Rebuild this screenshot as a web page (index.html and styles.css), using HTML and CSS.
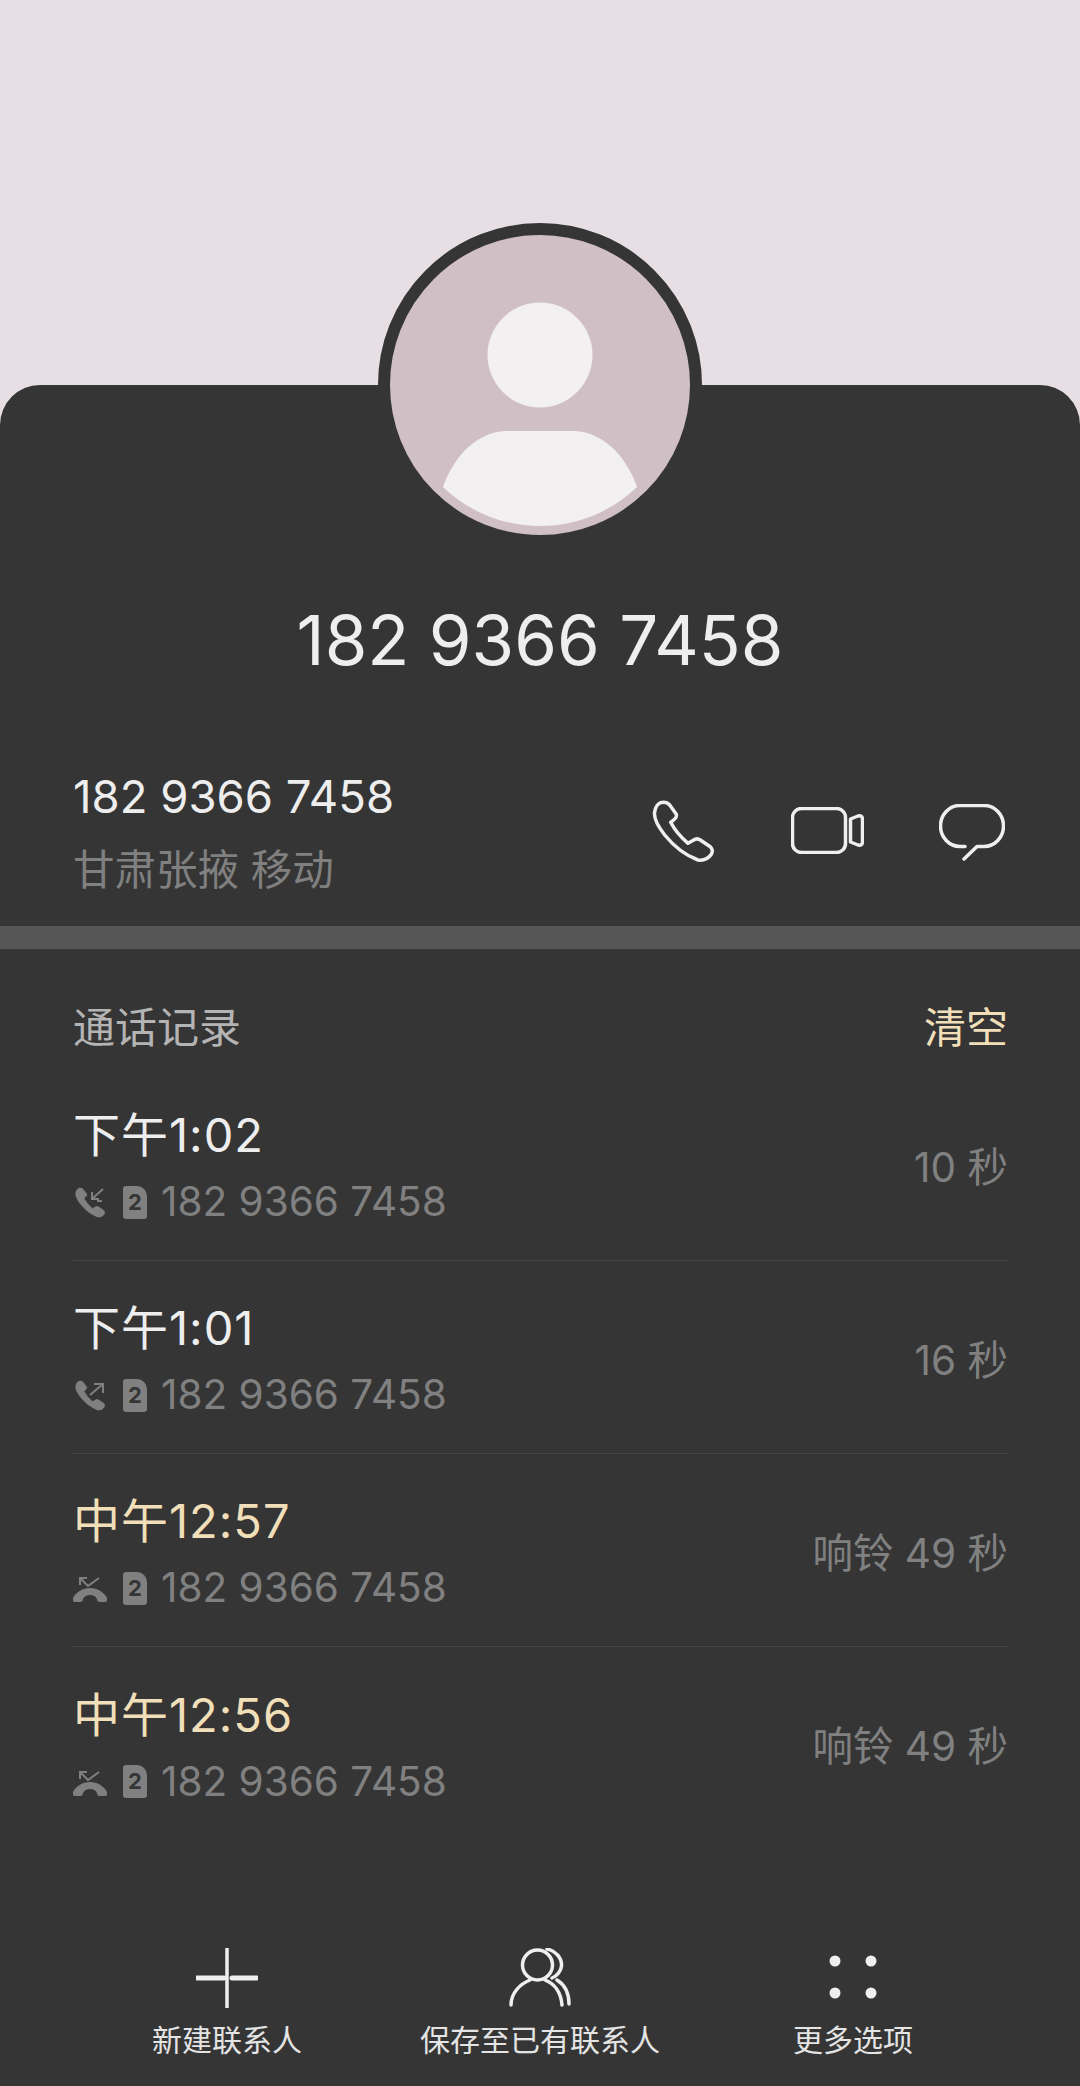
FILE: index.html
```html
<!DOCTYPE html><html lang="zh-CN">
<head>
<meta charset="UTF-8">
<meta name="viewport" content="width=device-width,initial-scale=1.0">
<title>182 9366 7458</title>
<link rel="stylesheet" href="styles.css">
</head>
<body>
<svg class="defs" width="0" height="0">
<symbol id="handset" viewBox="0 0 62 62"><path d="M7.300 2.700Q13.300 1 16.700 5L23.300 14.300Q24 17 21.700 19L17.700 22.300Q23.300 33.300 35 43.300L40.700 40Q44 37.700 47.300 40L57.300 46.700Q60.700 50 58.300 54.300Q54 61 45 60Q26.700 53.300 11.700 35Q0 20 1.700 11.700Q2.700 5 7.300 2.700Z"/></symbol>
</svg>
<div class="top"></div>
<main class="panel">
<div class="avatar">
<svg viewBox="0 0 300 300" width="300" height="300">
<circle cx="150" cy="120" r="52.500" fill="#f3f0f2"/>
<path d="M53 252C65 218 90 196 117 196H183C210 196 235 218 247 252C220 278 185 291 150 291C115 291 80 278 53 252Z" fill="#f3f0f2"/>
</svg>
</div>
<h1 class="name">182 9366 7458</h1>
<section class="contact">
<div>
<div class="contact-num">182 9366 7458</div>
<div class="contact-loc">甘肃张掖 移动</div>
</div>
<div class="contact-btns">
<svg class="line" width="64" height="64" viewBox="-1 -1 64 64"><path d="M7.300 2.700Q13.300 1 16.700 5L23.300 14.300Q24 17 21.700 19L17.700 22.300Q23.300 33.300 35 43.300L40.700 40Q44 37.700 47.300 40L57.300 46.700Q60.700 50 58.300 54.300Q54 61 45 60Q26.700 53.300 11.700 35Q0 20 1.700 11.700Q2.700 5 7.300 2.700Z"/></svg>
<svg class="line" width="73" height="47" viewBox="0 0 73 47"><rect x="1.500" y="1.500" width="53" height="44" rx="9"/><path d="M59.500 12L67 9Q71.500 8 71.500 12.500V34.500Q71.500 39 67 38L59.500 35Z"/></svg>
<svg class="line chat" width="66" height="57" viewBox="0 0 66 57"><path d="M26 42.500H21A19.500 20.500 0 0 1 21 1.500H45A19.500 20.500 0 0 1 45 42.500H38L25 55"/></svg>
</div>
</section>
<div class="bar"></div>
<section class="calls">
<div class="calls-head"><span>通话记录</span><span class="clear">清空</span></div>

<div class="call">
<div>
<div class="call-time">下午1:02</div>
<div class="call-info">
<svg class="kind" width="34" height="32" viewBox="0 0 34 32"><use href="#handset" x="2" y="1" width="31" height="31"/><path class="arrow" d="M30 3L19 13M19 6V13H26M24 15H29"/></svg>
<span class="sim">2</span>
<span>182 9366 7458</span>
</div>
</div>
<div class="call-len">10 秒</div>
</div>

<div class="call">
<div>
<div class="call-time">下午1:01</div>
<div class="call-info">
<svg class="kind" width="34" height="32" viewBox="0 0 34 32"><use href="#handset" x="2" y="1" width="31" height="31"/><path class="arrow" d="M17 16L30 5M21 5H30V14"/></svg>
<span class="sim">2</span>
<span>182 9366 7458</span>
</div>
</div>
<div class="call-len">16 秒</div>
</div>

<div class="call missed">
<div>
<div class="call-time">中午12:57</div>
<div class="call-info">
<svg class="kind" width="34" height="32" viewBox="0 0 34 32"><path d="M2 30Q-1 30 0 26C3 20 10 16 17 16C24 16 31 20 34 26Q35 30 32 30H27Q24 30 24 27Q22 23 17 23Q12 23 10 27Q10 30 7 30Z"/><path class="arrow" d="M7 13V6H14M7 6L15 14L26 6"/></svg>
<span class="sim">2</span>
<span>182 9366 7458</span>
</div>
</div>
<div class="call-len">响铃 49 秒</div>
</div>

<div class="call missed">
<div>
<div class="call-time">中午12:56</div>
<div class="call-info">
<svg class="kind" width="34" height="32" viewBox="0 0 34 32"><path d="M2 30Q-1 30 0 26C3 20 10 16 17 16C24 16 31 20 34 26Q35 30 32 30H27Q24 30 24 27Q22 23 17 23Q12 23 10 27Q10 30 7 30Z"/><path class="arrow" d="M7 13V6H14M7 6L15 14L26 6"/></svg>
<span class="sim">2</span>
<span>182 9366 7458</span>
</div>
</div>
<div class="call-len">响铃 49 秒</div>
</div>
</section>

<nav class="actions">
<div class="action">
<svg class="line" width="62" height="60" viewBox="0 0 62 60"><path d="M31 0V60"/><path class="thick" d="M1 30H28M36 30H61"/></svg>
<span>新建联系人</span>
</div>
<div class="action">
<svg class="line" width="62" height="60" viewBox="0 0 62 60"><ellipse cx="28.500" cy="17" rx="15" ry="15"/><path d="M2 57C2 45 11 36 21 32M36 32C46 36 52 45 53 57M38 1C47 3 53 10 52.500 18C52 23 48 28 43 30M48 32C56 37 60 46 60 56"/></svg>
<span>保存至已有联系人</span>
</div>
<div class="action">
<svg class="dots" width="62" height="60" viewBox="0 0 62 60"><circle cx="13" cy="13" r="5.500"/><circle cx="49" cy="13" r="5.500"/><circle cx="13" cy="45" r="5.500"/><circle cx="49" cy="45" r="5.500"/></svg>
<span>更多选项</span>
</div>
</nav>
</main>
</body>
</html>
```

FILE: styles.css
```css
*,*::before,*::after{margin:0;padding:0;box-sizing:border-box}
:root{--panel:#353535;--gold:#f0dfb8;--gray:#808080;--text:#eeeeee}
html,body{height:100%}
body{font-family:Inter,"Noto Sans CJK SC",sans-serif;background:#e8dfe5;color:var(--text);display:flex;flex-direction:column;height:2086px;overflow:hidden}
.defs{position:absolute}
.top{height:385px;flex:none}
.panel{flex:1;background:var(--panel);border-radius:40px 40px 0 0;display:flex;flex-direction:column}
.avatar{width:324px;height:324px;margin:-162px auto 0;border:12px solid var(--panel);border-radius:50%;background:#d0c0c6;overflow:hidden;flex:none}
.avatar svg{display:block}
.name{font-size:69px;font-weight:400;line-height:80px;text-align:center;margin-top:53px}
.contact{display:flex;justify-content:space-between;align-items:center;padding:87px 75px 26px 73px}
.contact-num{font-size:45.500px;line-height:60px}
.contact-loc{font-size:41.500px;line-height:60px;margin-top:13px;color:var(--gray)}
.contact-btns{display:flex;align-items:center;gap:75px;margin-top:-6px}
.line{fill:none;stroke:#efefef;stroke-width:3.500;stroke-linecap:round;stroke-linejoin:round;display:block}
.line .thick{stroke-width:5}
.chat{margin-top:4px}
.bar{height:23px;background:#565656;flex:none}
.calls{padding:51px 72px 0 73px}
.calls-head{display:flex;justify-content:space-between;font-size:42px;line-height:56px;color:#b4b4b4;margin-bottom:12px}
.clear{color:var(--gold)}
.call{display:flex;justify-content:space-between;align-items:center;height:193px;padding-top:41px;padding-bottom:35px;border-bottom:1px solid #464646}
.call:last-child{border-bottom:none}
.call-time{font-size:47px;line-height:56px;letter-spacing:1px}
.missed .call-time{color:var(--gold)}
.call-info{display:flex;align-items:center;margin-top:14px;font-size:40.500px;line-height:50px;color:var(--gray)}
.kind{fill:var(--gray);display:block}
.kind use{stroke:var(--gray);stroke-width:1.500}
.kind .arrow{fill:none;stroke:var(--gray);stroke-width:2}
.sim{width:24px;height:33px;margin:0 14px 0 16px;background:var(--gray);color:var(--panel);border-radius:3px 10px 3px 3px;font-size:22px;font-weight:700;line-height:33px;text-align:center}
.call-len{font-size:40.500px;margin-bottom:6px;color:var(--gray)}
.actions{margin-top:auto;display:grid;grid-template-columns:repeat(3,313px);justify-content:center;padding-bottom:26px}
.action{display:flex;flex-direction:column;align-items:center;gap:12px;font-size:30px;line-height:40px;color:#e4e4e4;white-space:nowrap}
.dots{fill:#efefef;display:block}
```
